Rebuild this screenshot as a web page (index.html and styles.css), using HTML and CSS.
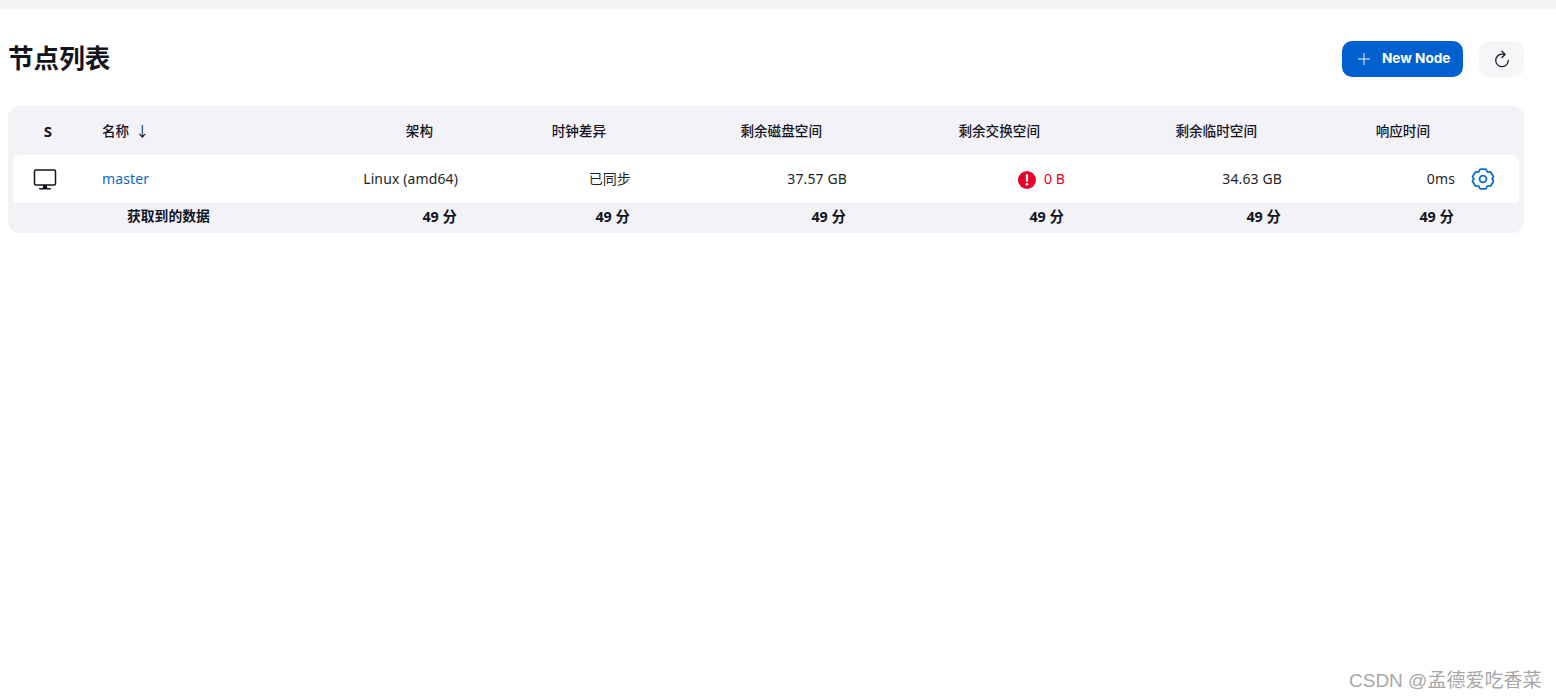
FILE: index.html
```html
<!DOCTYPE html>
<html lang="zh-CN">
<head>
<meta charset="utf-8">
<title>节点列表</title>
<link rel="stylesheet" href="styles.css">
</head>
<body>
<div class="topbar"></div>
<main class="page">
  <header class="head">
    <h1 class="title">节点列表</h1>
    <div class="actions">
      <a class="btn-primary">
        <svg class="plus" viewBox="112 112 288 288" width="12" height="12"><path d="M256 112v288M400 256H112" fill="none" stroke="currentColor" stroke-width="22"/></svg>
        <span>New Node</span>
      </a>
      <a class="btn-icon">
        <svg viewBox="0 0 512 512" width="20" height="20"><path d="M320 146s24.36-12-64-12a160 160 0 10160 160" fill="none" stroke="currentColor" stroke-width="32" stroke-linecap="round" stroke-miterlimit="10"/><path d="M256 58l80 80-80 80" fill="none" stroke="currentColor" stroke-width="32" stroke-linecap="round" stroke-linejoin="round"/></svg>
      </a>
    </div>
  </header>

  <section class="table">
    <div class="row row-head">
      <div class="cell cell-s">S</div>
      <div class="cell cell-name">名称<span class="arrow">↓</span></div>
      <div class="cell cell-num">架构</div>
      <div class="cell cell-num">时钟差异</div>
      <div class="cell cell-num">剩余磁盘空间</div>
      <div class="cell cell-num">剩余交换空间</div>
      <div class="cell cell-num">剩余临时空间</div>
      <div class="cell cell-num">响应时间</div>
      <div class="cell"></div>
    </div>
    <div class="row row-body">
      <div class="cell cell-icon">
        <svg viewBox="0 0 512 512" width="24" height="24"><rect x="32" y="64" width="448" height="320" rx="32" ry="32" fill="none" stroke="currentColor" stroke-width="32" stroke-linejoin="round"/><path d="M304 448l-8-64h-80l-8 64h96z" fill="currentColor"/><path d="M368 464H144" fill="none" stroke="currentColor" stroke-width="32" stroke-linecap="round"/></svg>
      </div>
      <div class="cell cell-name cell-text"><a class="link">master</a></div>
      <div class="cell cell-val cell-text">Linux (amd64)</div>
      <div class="cell cell-val cell-text">已同步</div>
      <div class="cell cell-val cell-text">37.57 GB</div>
      <div class="cell cell-val cell-error">
        <svg viewBox="0 0 18 18" width="18" height="18"><circle cx="9" cy="9" r="9" fill="currentColor"/><path d="M9 4.2v5.6" stroke="#fff" stroke-width="2.2" stroke-linecap="round"/><circle cx="9" cy="13.2" r="1.3" fill="#fff"/></svg>
        <span class="cell-text">0 B</span>
      </div>
      <div class="cell cell-val cell-text">34.63 GB</div>
      <div class="cell cell-val cell-text">0ms</div>
      <div class="cell cell-gear">
        <svg viewBox="0 0 24 24" width="24" height="24"><path d="M9.9 2.2H14.1Q15.3 2.2 15.6 3.4Q16.1 5.6 18.3 5Q19.5 4.6 20.1 5.7L22.2 9.3Q22.8 10.3 21.9 11Q20.3 12 21.9 13Q22.8 13.7 22.2 14.7L20.1 18.3Q19.5 19.4 18.3 19Q16.1 18.4 15.6 20.6Q15.3 21.8 14.1 21.8H9.9Q8.7 21.8 8.4 20.6Q7.9 18.4 5.7 19Q4.5 19.4 3.9 18.3L1.8 14.7Q1.2 13.7 2.1 13Q3.7 12 2.1 11Q1.2 10.3 1.8 9.3L3.9 5.7Q4.5 4.6 5.7 5Q7.9 5.6 8.4 3.4Q8.7 2.2 9.9 2.2Z" fill="none" stroke="currentColor" stroke-width="1.8" stroke-linejoin="round"/><circle cx="12" cy="12" r="3.4" fill="none" stroke="currentColor" stroke-width="1.8"/></svg>
      </div>
    </div>
    <div class="row row-foot">
      <div class="cell"></div>
      <div class="cell cell-label">获取到的数据</div>
      <div class="cell cell-total">49 分</div>
      <div class="cell cell-total">49 分</div>
      <div class="cell cell-total">49 分</div>
      <div class="cell cell-total">49 分</div>
      <div class="cell cell-total">49 分</div>
      <div class="cell cell-total">49 分</div>
      <div class="cell"></div>
    </div>
  </section>
</main>
<div class="watermark">CSDN @孟德爱吃香菜</div>
</body>
</html>
```

FILE: styles.css
```css
* { box-sizing: border-box; }
html, body { margin: 0; padding: 0; }
body {
  height: 699px;
  overflow: hidden;
  background: #fff;
  color: #14141f;
  font-family: "Noto Sans", "Noto Sans CJK SC", sans-serif;
  font-size: 14px;
}
.topbar { height: 9px; background: #f5f5f8; }
.page { padding: 32px 32px 0 8px; }
.head { display: flex; align-items: center; justify-content: space-between; height: 36px; }
.title {
  margin: 0;
  padding-bottom: 4px;
  font-size: 25.6px;
  font-weight: 700;
  line-height: 36px;
  font-family: "Noto Sans CJK SC", sans-serif;
}
.actions { display: flex; gap: 16px; }
.btn-primary {
  display: flex;
  align-items: center;
  gap: 12px;
  width: 121px;
  height: 36px;
  padding-left: 16px;
  border-radius: 10px;
  background: #0060d0;
  color: #fff;
  font-family: Inter, sans-serif;
  font-size: 13.6px;
  font-weight: 700;
}
.btn-primary span { padding-bottom: 2px; }
.btn-icon {
  display: flex;
  align-items: center;
  justify-content: center;
  width: 45px;
  height: 36px;
  border-radius: 10px;
  background: #f6f6f9;
}
.table {
  margin-top: 29px;
  width: 1516px;
  height: 127px;
  padding: 0 5px;
  border-radius: 12px;
  background: #f2f2f7;
}
.row {
  display: grid;
  grid-template-columns: 70px 217px 158px 173px 216px 218px 217px 173px 64px;
  align-items: center;
}
.row-head {
  height: 49px;
  padding-bottom: 2px;
  font-weight: 500;
  font-size: 13.6px;
  font-family: "Noto Sans CJK SC", sans-serif;
}
.row-body { height: 48px; background: #fff; border-radius: 8px 8px 3px 3px; }
.row-foot { height: 24px; font-weight: 700; font-size: 14.4px; }
.cell-text { padding-bottom: 2px; font-weight: 400; letter-spacing: 0.12px; color: #1f1f29; }
.cell-s {
  padding-top: 2px;
  text-align: center;
  font-family: "Noto Sans", sans-serif;
  font-size: 15px;
  font-weight: 700;
}
.cell-name { padding-left: 19px; }
.arrow { margin-left: 6px; font-weight: 400; font-size: 14px; }
.cell-num { text-align: right; padding-right: 25px; }
.cell-val { text-align: right; }
.cell-icon { display: flex; padding-left: 20px; padding-bottom: 1px; }
.link { color: #0b68c9; }
.cell-error { display: flex; align-items: center; justify-content: flex-end; gap: 8px; color: #e6002a; }
.cell-error .cell-text { color: #e6002a; }
.cell-error svg { margin-top: 2px; }
.cell-gear { display: flex; padding-left: 16px; color: #0b6ccf; }
.cell-label { padding-left: 44px; font-family: "Noto Sans CJK SC", sans-serif; font-size: 13.8px; font-weight: 700; }
.cell-total { text-align: right; padding-right: 1px; }
.watermark {
  position: absolute;
  left: 1349px;
  top: 667px;
  color: #a8a8a8;
  font-family: "Liberation Sans", "Noto Sans CJK SC", sans-serif;
  font-size: 19px;
  line-height: 27px;
  white-space: nowrap;
}
```
